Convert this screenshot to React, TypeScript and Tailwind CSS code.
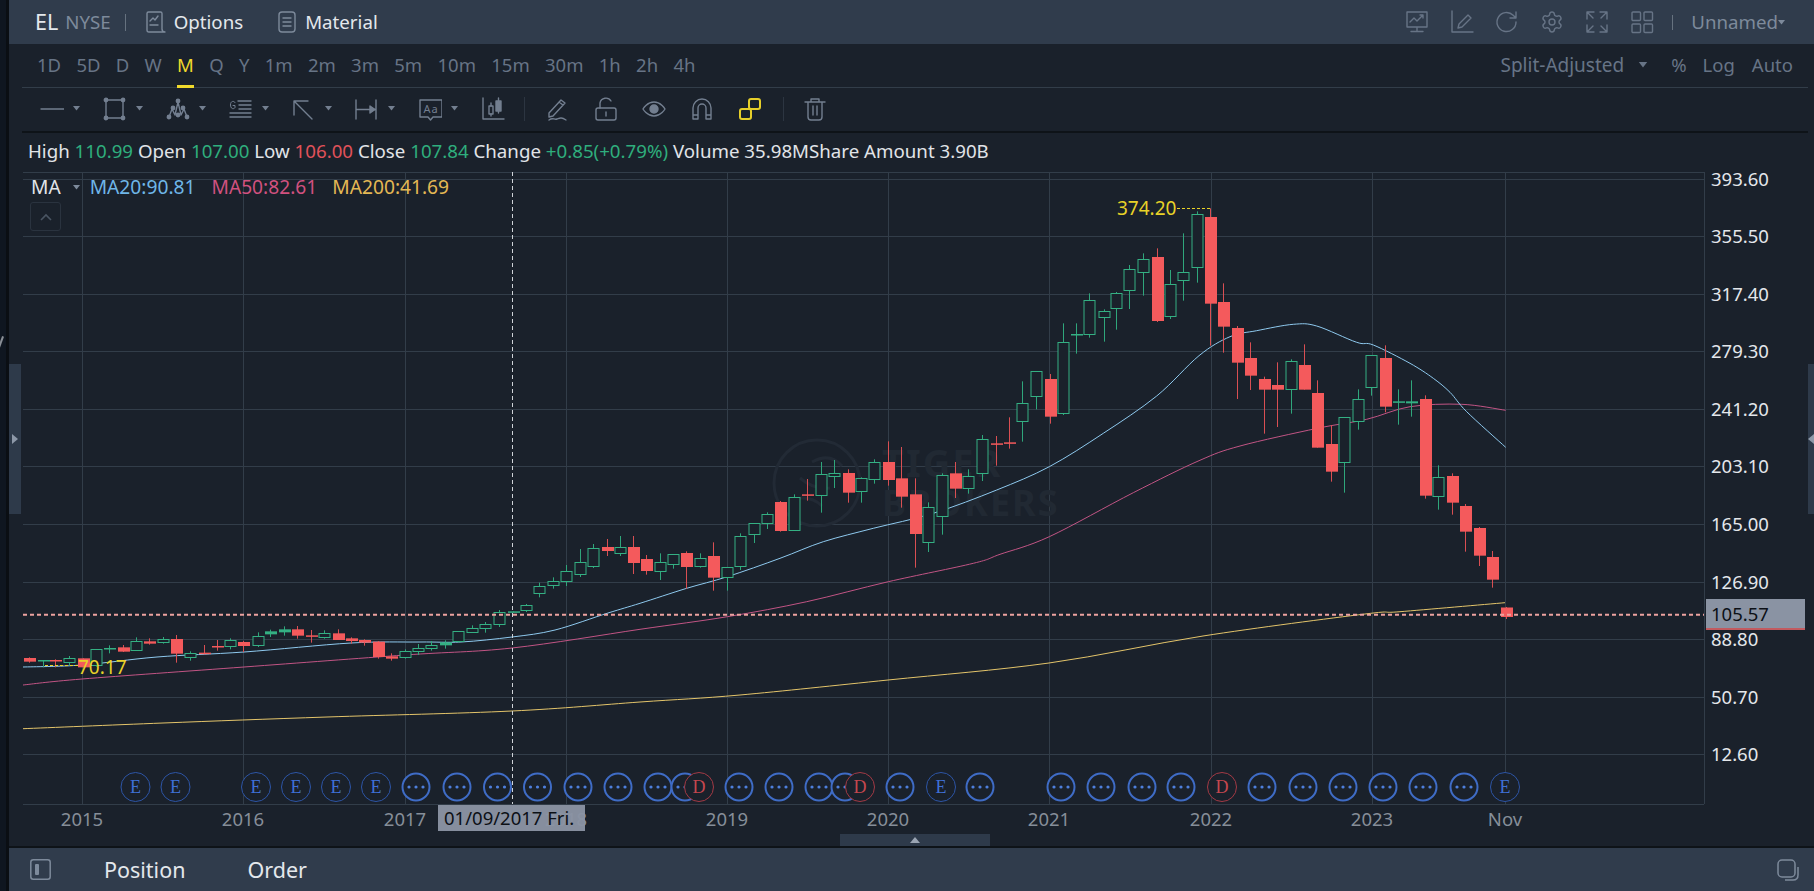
import React from "react";
import { Settings } from "lucide-react";

type C = [number, number, number, number, number, "g" | "r"];

// [x, bodyTop, bodyBottom, wickTop, wickBottom, colour] as read in three crops
const z7: C[] = [
  [82,294,305,292,308,"r"],[120,300,304,300,322,"g"],[155,300,304,298,322,"r"],[194,295,308,288,316,"g"],[231,295,322,295,322,"r"],
  [270,268,315,268,320,"g"],[306,264,268,256,280,"g"],[345,262,275,255,276,"r"],[382,244,271,232,273,"g"],[418,244,251,235,254,"r"],
  [457,238,248,231,251,"g"],[494,237,281,225,308,"r"],[533,278,289,274,302,"g"],[570,278,280,255,283,"r"],[608,258,260,240,272,"r"],
  [645,241,260,235,268,"g"],[681,246,258,243,276,"r"],[721,229,257,217,261,"g"],[757,214,223,209,231,"g"],[796,208,217,199,227,"g"],
  [832,208,227,198,236,"r"],[872,226,230,210,248,"r"],[908,220,231,211,236,"g"],[945,220,240,208,240,"r"],[984,235,243,232,251,"r"],
  [1020,240,248,238,257,"r"],[1059,245,291,243,296,"r"],[1096,289,296,280,302,"r"],[1135,273,292,268,296,"g"],[1171,265,275,252,285,"g"],
  [1208,256,266,243,272,"g"],[1247,247,256,241,266,"g"],[1283,214,245,214,248,"g"],[1322,204,215,196,218,"g"],[1359,193,205,186,218,"g"],
  [1398,157,194,150,201,"g"],[1435,154,158,154,158,"g"],[1472,136,152,132,156,"g"],[1510,77,97,68,112,"g"],[1547,64,77,52,86,"g"],
];
const mid: C[] = [
  [566,571,581,565,586,"g"],[579.5,562,574,549,577,"g"],[593,548,566,544,568,"g"],[606.5,547,551,539,556,"r"],[620,547,553,536,556,"g"],[633,547,563,536,574,"r"],
];
const z6: C[] = [
  [19,477,513,465,524,"r"],[61,487,515,460,540,"g"],[100,463,493,463,506,"g"],[139,459,501,454,566,"r"],[181,475,500,460,503,"g"],
  [220,468,533,427,572,"r"],[262,502,533,502,572,"g"],[301,409,500,400,510,"g"],[343,370,404,370,429,"g"],[382,343,371,337,387,"g"],
  [421,306,393,303,395,"r"],[463,292,392,283,392,"g"],[502,283,287,237,302,"r"],[544,223,286,186,338,"g"],[583,220,230,180,264,"g"],
  [625,219,278,208,308,"r"],[664,235,275,232,308,"g"],[703,187,239,178,251,"g"],[745,186,240,124,257,"r"],[784,235,290,141,323,"r"],
  [826,283,402,235,503,"r"],[865,322,428,307,456,"g"],[907,226,350,220,404,"g"],[946,220,266,186,294,"r"],[985,227,263,208,281,"g"],
  [1027,118,221,105,243,"g"],[1067,130,133,108,197,"r"],[1108,127,129,52,146,"r"],
];
const z4: C[] = [
  [67,640,695,574,755,"g"],[109,544,619,544,658,"g"],[149,567,680,552,701,"r"],[188,457,671,400,675,"g"],[229,432,435,400,491,"g"],
  [268,331,434,310,443,"g"],[311,364,382,358,455,"g"],[349,310,355,306,419,"g"],[388,238,301,225,357,"g"],[430,208,247,190,317,"g"],
  [470,201,393,175,396,"r"],[511,283,378,240,387,"g"],[550,247,271,130,332,"g"],[592,73,232,64,278,"g"],[631,81,341,55,467,"r"],
  [670,336,410,280,488,"r"],[712,414,518,408,627,"r"],[751,504,557,457,600,"r"],[793,567,599,560,731,"r"],[832,585,599,517,711,"r"],
  [874,514,598,508,671,"g"],[913,525,599,463,599,"r"],[952,609,773,571,773,"r"],[994,762,845,705,875,"r"],[1033,682,817,682,908,"g"],
  [1075,628,693,598,719,"g"],[1114,495,592,495,617,"g"],[1156,504,650,466,667,"r"],[1195,634,638,598,704,"g"],[1234,634,640,571,680,"g"],
  [1276,627,917,616,926,"r"],[1315,862,919,826,959,"g"],[1357,858,938,850,974,"r"],[1396,948,1025,942,1085,"r"],[1438,1014,1097,1011,1128,"r"],
  [1477,1101,1169,1083,1193,"r"],
];

const candles: C[] = [
  ...z7.map((c): C => [c[0]/2.8, 560+c[1]/3, 560+c[2]/3, 560+c[3]/3, 560+c[4]/3, c[5]]),
  ...mid,
  ...z6.map((c): C => [640+c[0]/3, 400+c[1]/3, 400+c[2]/3, 400+c[3]/3, 400+c[4]/3, c[5]]),
  ...z4.map((c): C => [1000+c[0]/3, 190+c[1]/3, 190+c[2]/3, 190+c[3]/3, 190+c[4]/3, c[5]]),
  [1505.5,607.5,617,607,619,"r"],
];

// smooth curve through the read points (Catmull-Rom to cubic Bezier)
const smooth = (a: number[][]) => {
  let d = `M${a[0][0].toFixed(1)} ${a[0][1].toFixed(1)}`;
  for (let i = 0; i < a.length - 1; i++) {
    const p0 = a[Math.max(i - 1, 0)], p1 = a[i], p2 = a[i + 1], p3 = a[Math.min(i + 2, a.length - 1)];
    const c1 = [p1[0] + (p2[0] - p0[0]) / 6, p1[1] + (p2[1] - p0[1]) / 6];
    const c2 = [p2[0] - (p3[0] - p1[0]) / 6, p2[1] - (p3[1] - p1[1]) / 6];
    d += `C${c1[0].toFixed(1)} ${c1[1].toFixed(1)} ${c2[0].toFixed(1)} ${c2[1].toFixed(1)} ${p2[0].toFixed(1)} ${p2[1].toFixed(1)}`;
  }
  return d;
};

const ma20 = smooth([
  [23,667],[82,665],[157,657],[244,652],[351,643],[420,642],[461,642],[512,637],[555,630],[608,613],
  ...[[0,610],[140,565],[262,530],[420,475],[550,425],[700,385],[880,340],[1070,270]].map(p=>[640+p[0]/3,400+p[1]/3]),
  ...[[148,830],[310,730],[470,618],[597,497],[690,440],[770,422],[880,403],[950,408],[1070,457],[1120,465],[1230,520],[1300,565],[1350,607],[1400,665],[1517,772]].map(p=>[1000+p[0]/3,190+p[1]/3]),
]);
const ma50 = smooth([
  [23,685],[82,679],[244,667],[405,655],[512,648],
  ...[[0,688],[262,650],[500,605],[745,545],[1000,490]].map(p=>[640+p[0]/3,400+p[1]/3]),
  ...[[0,1093],[148,1040],[400,908],[597,812],[720,768],[952,715],[1100,688],[1230,650],[1385,643],[1517,661]].map(p=>[1000+p[0]/3,190+p[1]/3]),
]);
const ma200 = smooth([[23,728.7],[163,723],[327,717],[512,711],[640,702],[740,695],[888,680],[1049,663],[1203,636],[1365,614],[1400,611.7],[1505,602.7]]);

const hLines = [172, 179, 236.5, 294, 351, 409, 466, 524, 582, 639.5, 697, 754, 804];
const vLines = [82, 243, 405, 566, 727, 888, 1049, 1211, 1372, 1505];
const prices: [string, number][] = [["393.60",179],["355.50",236.5],["317.40",294],["279.30",351],["241.20",409],["203.10",466],["165.00",524],["126.90",582],["88.80",639.5],["50.70",697],["12.60",754]];
const years: [string, number][] = [["2015",82],["2016",243],["2017",405],["2018",566],["2019",727],["2020",888],["2021",1049],["2022",1211],["2023",1372],["Nov",1505]];

type B = [number, "E" | "D" | "dots"];
const bullets: B[] = [
  [135.5,"E"],[175.5,"E"],[256,"E"],[296,"E"],[336,"E"],[376,"E"],[416,"dots"],[457,"dots"],[497.5,"dots"],[537.5,"dots"],[578,"dots"],[618,"dots"],[658,"dots"],[685,"dots"],[699,"D"],
  [739,"dots"],[779,"dots"],[819,"dots"],[845,"dots"],[860,"D"],[900,"dots"],[941,"E"],[980,"dots"],[1061,"dots"],[1101,"dots"],[1142,"dots"],[1181,"dots"],[1222,"D"],[1262,"dots"],[1303,"dots"],[1343,"dots"],[1383,"dots"],[1423,"dots"],[1464,"dots"],[1505,"E"],
];

const GREEN = "#34b083";
const RED = "#f45a5c";

function Chart() {
  return (
    <svg viewBox="9 172 1805 674" className="absolute inset-0 block h-full w-full" style={{ fontFamily: '"Noto Sans", sans-serif' }}>
      <g stroke="#323d49" strokeWidth="1">
        {hLines.map((y) => <line key={y} x1="23" x2="1704" y1={Math.floor(y)+0.5} y2={Math.floor(y)+0.5} />)}
        {vLines.map((x) => <line key={x} x1={x+0.5} x2={x+0.5} y1="172" y2="804" />)}
        <line x1="1704.5" x2="1704.5" y1="172" y2="804" />
      </g>
      <g fill="none" stroke="#222a35">
        <circle cx="817" cy="483" r="43" strokeWidth="3" />
        <path d="M790 500q20-6 32 6 M812 462q18-10 30 4 M800 478q14 12 30 10" strokeWidth="3" />
      </g>
      <g fill="#212933" fontWeight="700" fontSize="38" style={{ letterSpacing: "2px" }}>
        <text x="882" y="477">TIGER</text>
        <text x="882" y="516" fontSize="36">BROKERS</text>
      </g>
      <path d={ma200} fill="none" stroke="#e3c46a" strokeWidth="1" />
      <path d={ma50} fill="none" stroke="#c15484" strokeWidth="1" />
      <path d={ma20} fill="none" stroke="#8ec9ee" strokeWidth="1" />
      {candles.map((c, i) => {
        const x = Math.round(c[0]);
        const h = Math.max(c[2] - c[1], 1.5);
        const col = c[5] === "g" ? GREEN : RED;
        return (
          <g key={i}>
            <line x1={x+0.5} x2={x+0.5} y1={c[3]} y2={c[4]} stroke={c[5] === "g" ? "#2fa67b" : "#d94f53"} strokeWidth="1" />
            {c[5] === "g" && h > 3 ? (
              <rect x={x-5} y={Math.round(c[1])+0.5} width="11" height={Math.round(h)} fill="#1a212b" stroke={col} strokeWidth="1" />
            ) : (
              <rect x={x-5} y={c[1]} width="12" height={h} fill={col} />
            )}
          </g>
        );
      })}
      <line x1="23" x2="1704" y1="614.7" y2="614.7" stroke="#eda2a0" strokeWidth="2" strokeDasharray="4 3" />
      <line x1="512.5" x2="512.5" y1="172" y2="804" stroke="#cfd3d8" strokeWidth="1" strokeDasharray="4 3" />
      <g fill="#e8d228" fontSize="19">
        <text x="1117" y="214.500">374.20</text>
        <text x="78" y="673.500">70.17</text>
      </g>
      <line x1="1177" x2="1210" y1="208.5" y2="208.5" stroke="#e8d228" strokeDasharray="3 2" />
      <line x1="45" x2="78" y1="665.5" y2="665.5" stroke="#e8d228" strokeDasharray="3 2" />
      {bullets.map(([x, k], i) => {
        if (k === "dots") {
          return (
            <g key={i}>
              <circle cx={x} cy="787" r="13.5" fill="#1a212b" stroke="#3f6cc6" strokeWidth="2" />
              {[-7, 0, 7].map((d) => <circle key={d} cx={x+d} cy="787" r="1.6" fill="#4e7fdc" />)}
            </g>
          );
        }
        const red = k === "D";
        return (
          <g key={i}>
            <circle cx={x} cy="787" r="14.500" fill="#1a212b" stroke={red ? "#a33a45" : "#2d55a6"} strokeWidth="1" />
            <text x={x} y="793" textAnchor="middle" fontSize="18" fill={red ? "#c4474f" : "#3f70d6"} style={{ fontFamily: '"Liberation Serif", serif' }}>{k}</text>
          </g>
        );
      })}
      <g fill="#e4e7eb" fontSize="18.500">
        {prices.map(([t, y]) => <text key={t} x="1711" y={y + 6.5}>{t}</text>)}
      </g>
      <g fill="#868e99" fontSize="18.500" textAnchor="middle">
        {years.map(([t, x]) => <text key={t} x={x} y="825.500">{t}</text>)}
      </g>
      <rect x="1706" y="599" width="99" height="31" fill="#8a93a3" />
      <rect x="1706" y="628" width="99" height="2" fill="#c25a5f" />
      <text x="1711" y="620.500" fontSize="18.500" fill="#0c1016">105.57</text>
      <rect x="438" y="805" width="147" height="26" fill="#8a93a3" fillOpacity="0.96" />
      <text x="444" y="824.500" fontSize="18.500" fill="#0c1016">01/09/2017 Fri.</text>
    </svg>
  );
}

const Caret = ({ className = "" }: { className?: string }) => (
  <svg width="7" height="5" viewBox="0 0 7 5" className={`shrink-0 ${className}`}><path d="M0 0h7L3.500 4.500z" fill="currentColor" /></svg>
);

const Ic = ({ w = 24, children, className = "" }: { w?: number; children: React.ReactNode; className?: string }) => (
  <svg width={w} height={24} viewBox={`0 0 ${w} 24`} fill="none" stroke="currentColor" strokeWidth="1.4" strokeLinecap="round" strokeLinejoin="round" className={`shrink-0 ${className}`}>{children}</svg>
);

const tools: React.ReactNode[] = [
  <Ic key="l"><path d="M1 12h23" /></Ic>,
  <Ic key="r"><path d="M3 3h17v18H3z" /><g fill="currentColor"><circle cx="3" cy="3" r="1.700" /><circle cx="20" cy="3" r="1.700" /><circle cx="3" cy="21" r="1.700" /><circle cx="20" cy="21" r="1.700" /></g></Ic>,
  <Ic key="p"><path d="M3 20l3-8 3 6 3-13 3 13 3-6 3 8" /><g fill="currentColor"><circle cx="3" cy="20" r="1.700" /><circle cx="7" cy="11" r="1.700" /><circle cx="12" cy="4" r="1.700" /><circle cx="12" cy="18" r="1.700" /><circle cx="17" cy="11" r="1.700" /><circle cx="21" cy="20" r="1.700" /></g></Ic>,
  <Ic key="g"><path d="M9 4h13M10 8h12M10 12h12M1 16h21M1 20h21" /><path d="M6 5.500C5 3.500 1.500 3.800 1.500 8s3.500 4.500 4.500 2.500V8.500H4" strokeWidth="1" /></Ic>,
  <Ic key="a"><path d="M2 4l18 18M2 4h14M2 4v14" /></Ic>,
  <Ic key="h"><path d="M1 3v19M21 3v19M1 12.500h19" /><path d="M15 9l5 3.500-5 3.500z" fill="currentColor" /></Ic>,
  <Ic key="t"><path d="M2 3h22v17H15l-2.500 3-2.500-3H2z" /><text x="13" y="15.500" textAnchor="middle" fontSize="11" fill="currentColor" stroke="none" style={{ fontFamily: '"Noto Sans", sans-serif', letterSpacing: "1px" }}>Aa</text></Ic>,
  <Ic key="c"><path d="M2 1v21h21" /><rect x="8" y="9" width="4" height="8" /><path d="M10 6v3M10 17v2" /><rect x="15" y="4" width="5" height="10" fill="currentColor" /><path d="M17.500 1v3M17.500 14v2" /></Ic>,
];

function App() {
  return (
    <div className="flex h-[891px] w-[1814px] overflow-hidden bg-[#0f1620] font-['Noto_Sans',sans-serif]">
      <div className="flex w-[9px] shrink-0 items-start border-r-[3px] border-[#0a0e13] pt-[336px]">
        <span className="h-[12px] w-[2px] rotate-[20deg] bg-[#8a8f96]" />
      </div>
      <div className="flex min-w-0 flex-1 flex-col bg-[#1a212b]">
        <header className="flex h-[44px] shrink-0 items-center bg-[#303c4c] pl-[26px] pr-[29px] text-[#7d8a9b]">
          <span className="text-[21.500px] text-[#e4e8ec]">EL</span>
          <span className="ml-[7px] text-[18.700px]">NYSE</span>
          <span className="ml-[14px] h-[17px] w-px bg-[#66727f]" />
          <Ic className="ml-[18px]" w={22}>
            <path d="M3 20V3.500Q3 2 4.500 2h12Q18 2 18 3.500V19q0 3 3 3H5q-2 0-2-2z" /><path d="M6 11l3-3 2 2 3-4M6 15h8" />
          </Ic>
          <span className="ml-[8px] text-[18.700px] text-[#e4e8ec]">Options</span>
          <Ic className="ml-[34px]" w={20}>
            <rect x="2" y="2" width="16" height="20" rx="3" /><path d="M6 8h8M6 12h8M6 16h8" />
          </Ic>
          <span className="ml-[8px] text-[18.700px] text-[#e4e8ec]">Material</span>
          <div className="ml-auto flex items-center gap-[21px] text-[#677486]">
            <Ic><path d="M2 2h20v15H2zM12 17v4M6 21.500h12" /><path d="M5 12l4-4 3 3 6-6M15 5h3v3" /></Ic>
            <Ic><path d="M2 1v21h21" /><path d="M8 18l1-4L18 5l3 3-9 9z" /></Ic>
            <Ic><path d="M21 12a9.500 9.500 0 1 1-2.800-6.700L21 8M21 2v6h-6" /></Ic>
            <Settings size={24} strokeWidth={1.4} className="shrink-0" />
            <Ic><path d="M2 9V2h7M2 2l6 6M15 2h7v7M22 2l-6 6M2 15v7h7M2 22l6-6M15 22h7v-7M22 22l-6-6" /></Ic>
            <Ic><rect x="2" y="2" width="8.500" height="8.500" rx="1" /><rect x="14" y="2" width="8.500" height="8.500" rx="1" /><rect x="2" y="14" width="8.500" height="8.500" rx="1" /><rect x="14" y="14" width="8.500" height="8.500" rx="1" /></Ic>
          </div>
          <span className="ml-[18px] h-[15px] w-px bg-[#66727f]" />
          <span className="ml-[18px] text-[18.700px]">Unnamed</span>
          <Caret className="text-[#7d8a9b]" />
        </header>

        <div className="ml-[13px] mr-[6px] flex h-[44px] shrink-0 items-center border-b border-[#323d49] pb-[1px] pl-[15px] pr-[15px] text-[18.500px] text-[#677486]">
          <div className="flex h-full items-center gap-[15.300px]">
            {["1D","5D","D","W","M","Q","Y","1m","2m","3m","5m","10m","15m","30m","1h","2h","4h"].map((t) => (
              <span key={t} className={t === "M" ? "mb-[-1px] flex h-[44px] items-center border-b-[3px] border-[#f0d92c] pt-[2px] text-[#f0d92c]" : ""}>{t}</span>
            ))}
          </div>
          <span className="ml-auto text-[19px]">Split-Adjusted</span>
          <Caret className="ml-[14px] h-[6px] w-[10px]" />
          <span className="ml-[23px]">%</span>
          <span className="ml-[16px]">Log</span>
          <span className="ml-[17px]">Auto</span>
        </div>

        <div className="ml-[13px] mr-[6px] flex h-[45px] shrink-0 items-center border-b-2 border-[#0e1318] pb-[2px] pl-[18px] text-[#737f90]">
          {tools.map((t, i) => (
            <div key={i} className="flex w-[63px] shrink-0 items-center">
              {t}
              {i < 7 && <Caret className="ml-[9px]" />}
            </div>
          ))}
          <span className="ml-[-20px] h-[24px] w-px bg-[#2c3541]" />
          <div className="ml-[21px] flex items-center gap-[24px]">
            <Ic><path d="M3 16L15 3l4 3L7 19l-4 1zM13 5l4 3M3 23c4-3 5 0 8-1s4-2 9 1" /></Ic>
            <Ic><rect x="2" y="11" width="20" height="12" rx="2" /><path d="M6 11V6a6 6 0 0 1 11-2M12 15v4" /></Ic>
            <Ic><path d="M1 12s4-7 11-7 11 7 11 7-4 7-11 7S1 12 1 12z" /><circle cx="12" cy="12" r="4" fill="currentColor" /></Ic>
            <Ic><path d="M3 22V11a9 9 0 0 1 18 0v11h-5V11a4 4 0 0 0-8 0v11zM3 18h5M16 18h5" /></Ic>
            <Ic className="text-[#e6cf2a]"><g strokeWidth="2"><rect x="2" y="12" width="11" height="10" rx="2" /><rect x="11" y="2" width="11" height="10" rx="2" /></g></Ic>
          </div>
          <span className="ml-[21px] h-[24px] w-px bg-[#2c3541]" />
          <Ic className="ml-[19px]"><path d="M2 5h20M8 5V2h8v3M5 5v15q0 3 3 3h8q3 0 3-3V5M10 9v9M14 9v9" /></Ic>
        </div>

        <div className="flex h-[39px] shrink-0 items-center whitespace-pre pb-[2px] pl-[19px] text-[18.700px] text-[#e1e4e8]">
          <span>High </span><span className="text-[#2fae7d]">110.99</span><span> Open </span><span className="text-[#2fae7d]">107.00</span><span> Low </span><span className="text-[#e0525a]">106.00</span><span> Close </span><span className="text-[#2fae7d]">107.84</span><span> Change </span><span className="text-[#2fae7d]">+0.85(+0.79%)</span><span> Volume 35.98MShare Amount 3.90B</span>
        </div>

        <div className="relative min-h-0 flex-1">
          <Chart />
          <div className="absolute left-[22px] top-[1px] flex items-center text-[19.200px]">
            <span className="text-[#e1e4e8]">MA</span>
            <Caret className="ml-[12px] text-[#7d8a9b]" />
            <span className="ml-[10px] text-[#6fb6e8]">MA20:90.81</span>
            <span className="ml-[16px] text-[#d1517f]">MA50:82.61</span>
            <span className="ml-[15px] text-[#e4b854]">MA200:41.69</span>
          </div>
          <div className="absolute left-[21px] top-[30px] flex h-[29px] w-[31px] items-center justify-center rounded-[3px] border border-[#2a333f]">
            <svg width="12" height="8" viewBox="0 0 12 8" fill="none" stroke="#4a5563" strokeWidth="1.600"><path d="M1 7l5-5 5 5" /></svg>
          </div>
          <div className="absolute left-0 top-[192px] flex h-[150px] w-[12px] items-center bg-[#2e3a4a] pl-[3px]">
            <svg width="6" height="10" viewBox="0 0 6 10"><path d="M0 0l6 5-6 5z" fill="#8d98a8" /></svg>
          </div>
          <div className="absolute right-0 top-[192px] flex h-[150px] w-[6px] items-center bg-[#2e3a4a]">
            <svg width="6" height="10" viewBox="0 0 6 10"><path d="M6 0L0 5l6 5z" fill="#8d98a8" /></svg>
          </div>
          <div className="absolute bottom-0 left-[831px] flex h-[12px] w-[150px] items-center justify-center bg-[#2e3a4a]">
            <svg width="10" height="6" viewBox="0 0 10 6"><path d="M0 6l5-6 5 6z" fill="#9aa4b2" /></svg>
          </div>
        </div>

        <footer className="flex h-[45px] shrink-0 items-center border-t-2 border-[#0e1318] bg-[#303c4c] pl-[21px] pr-[15px] text-[21.500px] text-[#e4e8ec]">
          <svg width="21" height="21" viewBox="0 0 21 21" fill="none" className="shrink-0 text-[#7d8a9b]">
            <rect x="0.800" y="0.800" width="19.400" height="19.400" rx="2.500" stroke="currentColor" strokeWidth="1.500" />
            <rect x="5" y="5" width="4" height="11" rx="1" fill="currentColor" />
          </svg>
          <span className="ml-[53px] pt-[2px]">Position</span>
          <span className="ml-[62px] pt-[2px]">Order</span>
          <svg width="22" height="22" viewBox="0 0 22 22" fill="none" stroke="currentColor" strokeWidth="1.500" className="ml-auto shrink-0 text-[#7d8a9b]">
            <rect x="1" y="1" width="17" height="17" rx="4" /><path d="M21 8v8q0 5-5 5H8" />
          </svg>
        </footer>
      </div>
    </div>
  );
}

export default App;
